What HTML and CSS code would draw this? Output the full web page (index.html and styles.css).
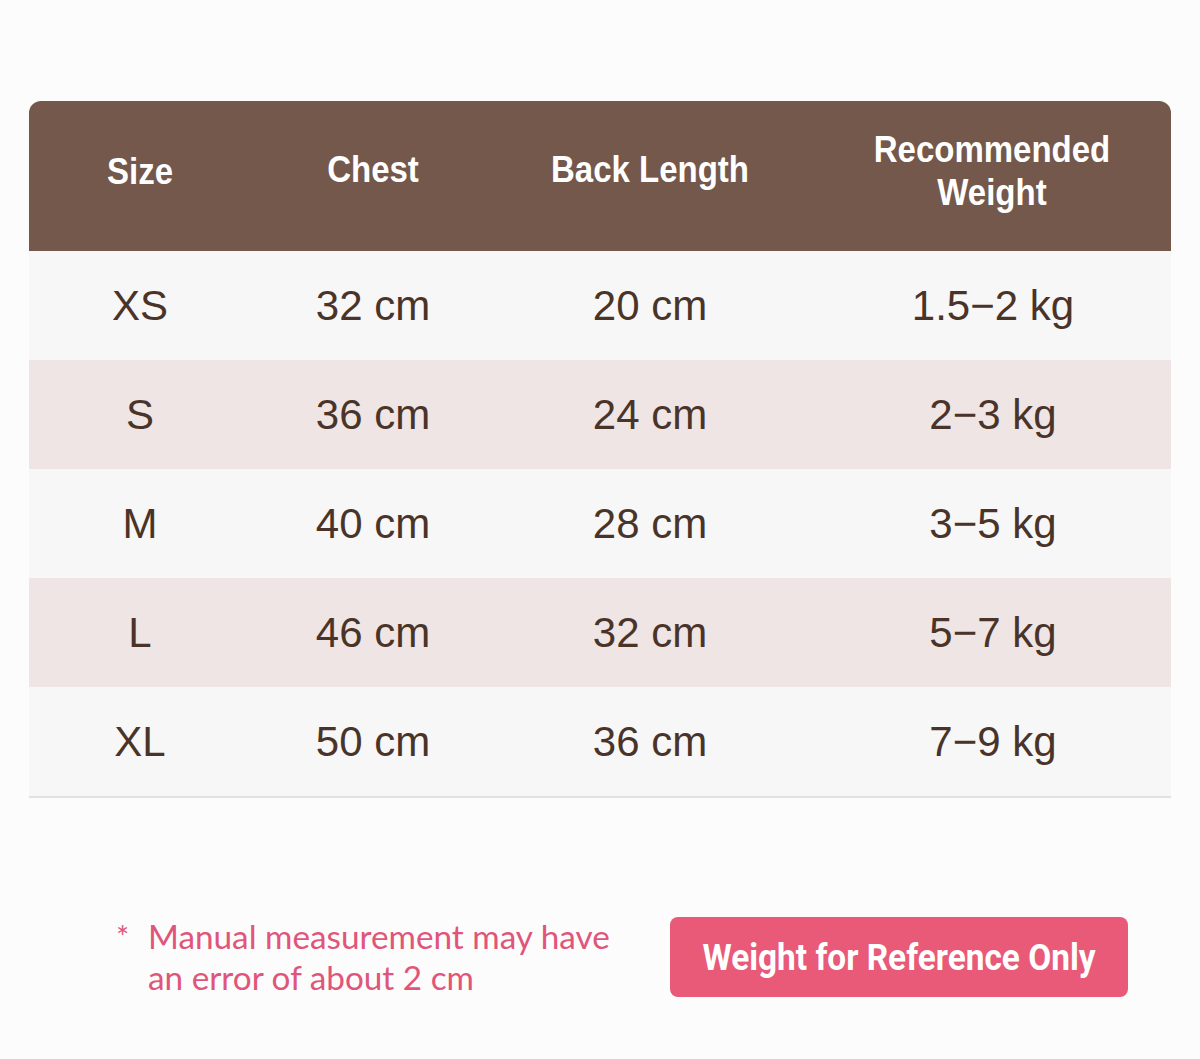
FILE: index.html
```html
<!DOCTYPE html>
<html lang="en">
<head>
<meta charset="utf-8">
<title>Size Chart</title>
<link rel="stylesheet" href="styles.css">
</head>
<body>
<main class="page">
  <div class="chart">
    <div class="row head">
      <div class="cell"><span class="hl">Size</span></div>
      <div class="cell"><span class="hl">Chest</span></div>
      <div class="cell"><span class="hl">Back Length</span></div>
      <div class="cell"><span class="hl two">Recommended<br>Weight</span></div>
    </div>
    <div class="row odd">
      <div class="cell">XS</div><div class="cell">32 cm</div><div class="cell">20 cm</div><div class="cell">1.5−2 kg</div>
    </div>
    <div class="row even">
      <div class="cell">S</div><div class="cell">36 cm</div><div class="cell">24 cm</div><div class="cell">2−3 kg</div>
    </div>
    <div class="row odd">
      <div class="cell">M</div><div class="cell">40 cm</div><div class="cell">28 cm</div><div class="cell">3−5 kg</div>
    </div>
    <div class="row even">
      <div class="cell">L</div><div class="cell">46 cm</div><div class="cell">32 cm</div><div class="cell">5−7 kg</div>
    </div>
    <div class="row odd last">
      <div class="cell">XL</div><div class="cell">50 cm</div><div class="cell">36 cm</div><div class="cell">7−9 kg</div>
    </div>
  </div>
  <div class="footer">
    <p class="note"><span class="star">*</span><span class="note-text">Manual measurement may have<br>an error of about 2 cm</span></p>
    <div class="badge"><span class="badge-text">Weight for Reference Only</span></div>
  </div>
</main>
</body>
</html>
```

FILE: styles.css
```css
html, body {
  margin: 0;
  padding: 0;
  background: #fcfcfc;
}
.page {
  width: 1200px;
  height: 1059px;
  padding: 101px 29px 0 29px;
  box-sizing: border-box;
}
.chart {
  width: 1142px;
}
.row {
  display: grid;
  grid-template-columns: 222px 244px 310px 366px;
  align-items: center;
  height: 109px;
  font-family: "Liberation Sans", Arial, sans-serif;
}
.cell {
  text-align: center;
}
.row .cell:nth-child(4) { padding-left: 10px; }
.head .cell:nth-child(4) { padding-left: 8px; }
.head {
  height: 150px;
  background: #74584b;
  border-radius: 12px 12px 0 0;
  color: #ffffff;
  font-weight: bold;
  font-size: 33px;
  line-height: 38px;
}
.hl {
  display: inline-block;
  transform: scaleY(1.13);
  margin-bottom: 12px;
}
.hl.two { margin-bottom: 10px; }
.head .cell:first-child .hl { margin-bottom: 8px; }
.odd { background: #f7f7f7; }
.even { background: #efe5e5; }
.row:not(.head) {
  color: #4a3429;
  font-size: 42px;
}
.row:not(.head) .cell { padding-top: 1px; }
.last {
  border-bottom: 2px solid #e2e2e2;
}
.footer {
  display: flex;
  align-items: center;
  margin-top: 118px;
}
.note {
  margin: 0 0 0 87px;
  display: flex;
  align-items: flex-start;
  color: #e0557a;
  font-family: Lato, "Open Sans", sans-serif;
  font-size: 33.3px;
  line-height: 41px;
  width: 554px;
}
.star {
  width: 32px;
  flex: none;
  font-size: 31px;
}
.note-text { display: block; white-space: nowrap; }
.badge {
  width: 458px;
  height: 80px;
  background: #e85a78;
  border-radius: 8px;
  color: #ffffff;
  font-family: Roboto, "Liberation Sans", sans-serif;
  font-weight: bold;
  font-size: 33.4px;
  display: flex;
  align-items: center;
  justify-content: center;
}
.badge-text {
  display: inline-block;
  transform: scaleY(1.08);
}
```
